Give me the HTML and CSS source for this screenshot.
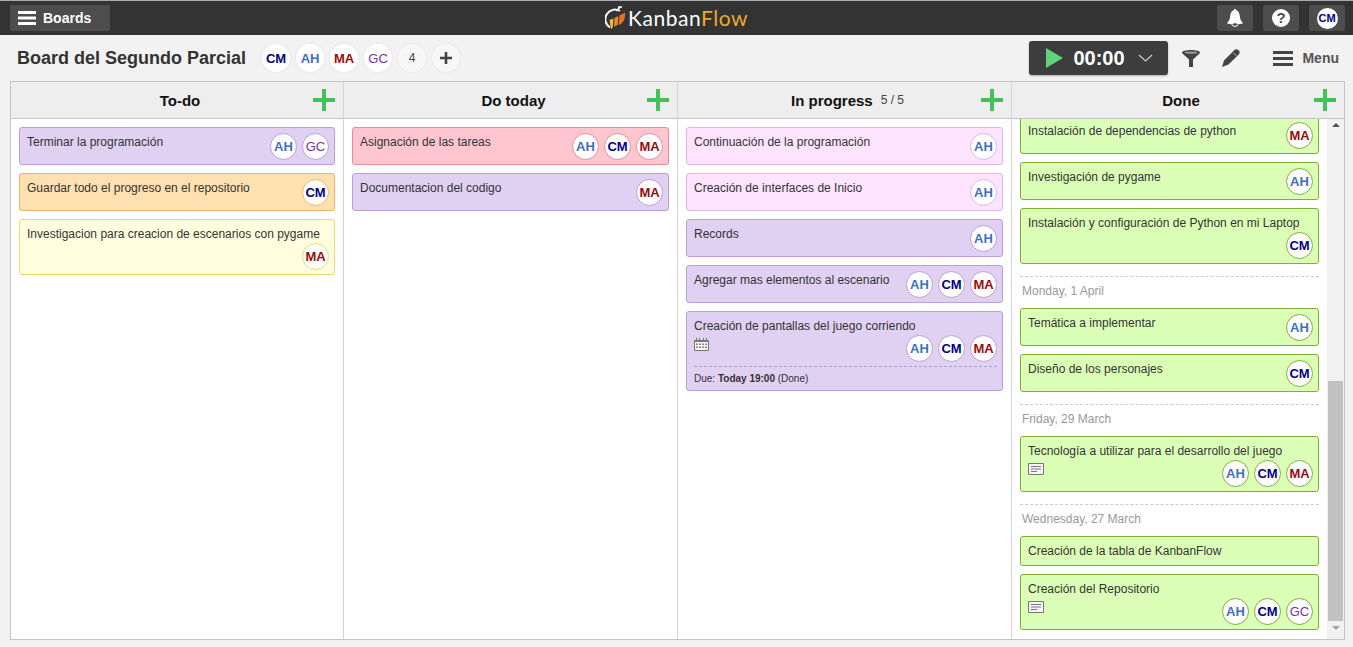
FILE: index.html
```html
<!DOCTYPE html>
<html lang="en">
<head>
    <meta charset="UTF-8">
    <meta name="viewport" content="width=device-width, initial-scale=1.0">
    <title>KanbanFlow</title>
    <link rel="stylesheet" href="styles.css">
</head>
<body>
    <header class="topbar">
        <button class="top-btn boards-btn">
            <svg width="18" height="14" viewBox="0 0 18 14"><path d="M0 0h18v3H0zM0 5.500h18v3H0zM0 11h18v3H0z" fill="#fff"/></svg>
            Boards
        </button>
        <div class="logo">
            <svg width="22" height="24" viewBox="0 0 22 24">
                <path d="M5 21.500A9 9 0 0 1 15 5" fill="none" stroke="#fff" stroke-width="2"/>
                <path d="M11 5l4-3.500M13 1l4 0" fill="none" stroke="#fff" stroke-width="1.500"/>
                <path d="M4.500 14l4-1.500-1 9.500-1.500 1z" fill="#f5c33a"/>
                <path d="M9.500 12l4-2-1 9-3.500 1.500z" fill="#ee8a22"/>
                <path d="M14.500 9.500L20 6.500c.5 6-1.500 11-6.500 12.500z" fill="#e8711d"/>
            </svg>
            <span class="logo-text">Kanban<span class="logo-flow">Flow</span></span>
        </div>
        <div class="top-right">
            <button class="top-btn icon-btn">
                <svg width="16" height="18" viewBox="0 0 16 18">
                    <path d="M8 0c.8 0 1.300.6 1.300 1.300C11.500 2 12.500 4 12.800 7c.2 3 1.200 5 3.200 7.200-2 1.300-14 1.300-16 0C2 12 3 10 3.200 7 3.500 4 4.500 2 6.700 1.300 6.700.6 7.200 0 8 0z" fill="#fff"/>
                    <ellipse cx="8" cy="15.500" rx="3" ry="1.800" fill="#4d4d4d" stroke="#fff"/>
                </svg>
            </button>
            <button class="top-btn icon-btn">
                <span class="help">?</span>
            </button>
            <button class="top-btn icon-btn">
                <span class="me">CM</span>
            </button>
        </div>
    </header>

    <div class="subbar">
        <h1 class="board-title">Board del Segundo Parcial</h1>
        <div class="members">
            <span class="member cm">CM</span>
            <span class="member ah">AH</span>
            <span class="member ma">MA</span>
            <span class="member gc">GC</span>
            <span class="member count">4</span>
            <span class="member add">
                <svg width="12" height="12" viewBox="0 0 12 12"><path d="M4.700 0h2.600v4.700H12v2.600H7.300V12H4.700V7.300H0V4.700h4.700z" fill="#444"/></svg>
            </span>
        </div>
        <div class="tools">
            <button class="timer">
                <svg width="17" height="20" viewBox="0 0 17 20"><path d="M0 0l17 10L0 20z" fill="#5fd47a"/></svg>
                <span class="timer-time">00:00</span>
                <svg width="15" height="8" viewBox="0 0 15 8"><path d="M1 1l6.500 6L14 1" fill="none" stroke="#ccc" stroke-width="1.200"/></svg>
            </button>
            <svg class="tool-filter" width="18" height="17" viewBox="0 0 18 17">
                <path d="M0 2.500C0 1 4 0 9 0s9 1 9 2.500c0 .6-.4 1-1 1.500l-6 5.500V17H7V9.500L1 4C.4 3.500 0 3.100 0 2.500z" fill="#444"/>
                <ellipse cx="9" cy="2.600" rx="6.500" ry="1.100" fill="#999"/>
            </svg>
            <svg class="tool-pencil" width="18" height="18" viewBox="0 0 18 18">
                <path d="M0 18l2-6.500L12 1.500C13.500 0 15 0 16.500 1.200 18 2.500 18 4 16.700 5.500L6.500 15.500z" fill="#444"/>
                <path d="M11.500 4l2.800 2.800" fill="none" stroke="#ddd" stroke-width=".8"/>
            </svg>
            <div class="menu-link">
                <svg width="20" height="15" viewBox="0 0 20 15"><path d="M0 0h20v3H0zM0 6h20v3H0zM0 12h20v3H0z" fill="#444"/></svg>
                <span>Menu</span>
            </div>
        </div>
    </div>

    <main class="board">
        <section class="column">
            <div class="column-head">
                <span class="column-name">To-do</span>
                <span class="plus"></span>
            </div>
            <div class="cards">
                <div class="card purple">
                    <div class="card-text">Terminar la programación</div>
                    <div class="avatars"><span class="avatar ah">AH</span><span class="avatar gc">GC</span></div>
                </div>
                <div class="card orange">
                    <div class="card-text">Guardar todo el progreso en el repositorio</div>
                    <div class="avatars"><span class="avatar cm">CM</span></div>
                </div>
                <div class="card yellow">
                    <div class="card-text">Investigacion para creacion de escenarios con pygame</div>
                    <div class="avatars"><span class="avatar ma">MA</span></div>
                </div>
            </div>
        </section>

        <section class="column">
            <div class="column-head">
                <span class="column-name">Do today</span>
                <span class="plus"></span>
            </div>
            <div class="cards">
                <div class="card red">
                    <div class="card-text">Asignación de las tareas</div>
                    <div class="avatars"><span class="avatar ah">AH</span><span class="avatar cm">CM</span><span class="avatar ma">MA</span></div>
                </div>
                <div class="card purple">
                    <div class="card-text">Documentacion del codigo</div>
                    <div class="avatars"><span class="avatar ma">MA</span></div>
                </div>
            </div>
        </section>

        <section class="column">
            <div class="column-head">
                <span class="column-name">In progress</span>
                <span class="wip">5 / 5</span>
                <span class="plus"></span>
            </div>
            <div class="cards">
                <div class="card pink">
                    <div class="card-text">Continuación de la programación</div>
                    <div class="avatars"><span class="avatar ah">AH</span></div>
                </div>
                <div class="card pink">
                    <div class="card-text">Creación de interfaces de Inicio</div>
                    <div class="avatars"><span class="avatar ah">AH</span></div>
                </div>
                <div class="card purple">
                    <div class="card-text">Records</div>
                    <div class="avatars"><span class="avatar ah">AH</span></div>
                </div>
                <div class="card purple">
                    <div class="card-text">Agregar mas elementos al escenario</div>
                    <div class="avatars"><span class="avatar ah">AH</span><span class="avatar cm">CM</span><span class="avatar ma">MA</span></div>
                </div>
                <div class="card purple">
                    <div class="card-text card-full">Creación de pantallas del juego corriendo</div>
                    <svg class="card-icon" width="15" height="13" viewBox="0 0 15 13">
                        <path d="M.5 2.500h14v10H.5z" fill="#f4f4f4" stroke="#777"/>
                        <path d="M1 2h13v2H1z" fill="#777"/>
                        <path d="M2 0h1v2H2zM5 0h1v2H5zM9 0h1v2H9zM12 0h1v2h-1z" fill="#777"/>
                        <path d="M2 5.500h2v1.500H2zM5 5.500h2v1.500H5zM8 5.500h2v1.500H8zM11 5.500h2v1.500h-2zM2 8.500h2v1.500H2zM5 8.500h2v1.500H5zM8 8.500h2v1.500H8zM11 8.500h2v1.500h-2z" fill="#888"/>
                    </svg>
                    <div class="avatars"><span class="avatar ah">AH</span><span class="avatar cm">CM</span><span class="avatar ma">MA</span></div>
                    <div class="due">Due: <b>Today 19:00</b> (Done)</div>
                </div>
            </div>
        </section>

        <section class="column">
            <div class="column-head">
                <span class="column-name">Done</span>
                <span class="plus"></span>
            </div>
            <div class="done-body">
                <div class="cards cards-scrolled">
                    <div class="card green">
                        <div class="card-text">Instalación de dependencias de python</div>
                        <div class="avatars"><span class="avatar ma">MA</span></div>
                    </div>
                    <div class="card green">
                        <div class="card-text">Investigación de pygame</div>
                        <div class="avatars"><span class="avatar ah">AH</span></div>
                    </div>
                    <div class="card green">
                        <div class="card-text card-full">Instalación y configuración de Python en mi Laptop</div>
                        <div class="avatars"><span class="avatar cm">CM</span></div>
                    </div>
                    <div class="day">Monday, 1 April</div>
                    <div class="card green">
                        <div class="card-text">Temática a implementar</div>
                        <div class="avatars"><span class="avatar ah">AH</span></div>
                    </div>
                    <div class="card green">
                        <div class="card-text">Diseño de los personajes</div>
                        <div class="avatars"><span class="avatar cm">CM</span></div>
                    </div>
                    <div class="day">Friday, 29 March</div>
                    <div class="card green">
                        <div class="card-text card-full">Tecnología a utilizar para el desarrollo del juego</div>
                        <svg class="card-icon" width="16" height="12" viewBox="0 0 16 12">
                            <path d="M.5.500h15v11H.5z" fill="#f7f7f7" stroke="#777"/>
                            <path d="M3 3h10v1H3zM3 5.500h10v1H3zM3 8h6v1H3z" fill="#777"/>
                        </svg>
                        <div class="avatars"><span class="avatar ah">AH</span><span class="avatar cm">CM</span><span class="avatar ma">MA</span></div>
                    </div>
                    <div class="day">Wednesday, 27 March</div>
                    <div class="card green">
                        <div class="card-text card-plain">Creación de la tabla de KanbanFlow</div>
                    </div>
                    <div class="card green">
                        <div class="card-text card-full">Creación del Repositorio</div>
                        <svg class="card-icon" width="16" height="12" viewBox="0 0 16 12">
                            <path d="M.5.500h15v11H.5z" fill="#f7f7f7" stroke="#777"/>
                            <path d="M3 3h10v1H3zM3 5.500h10v1H3zM3 8h6v1H3z" fill="#777"/>
                        </svg>
                        <div class="avatars"><span class="avatar ah">AH</span><span class="avatar cm">CM</span><span class="avatar gc">GC</span></div>
                    </div>
                </div>
                <div class="scrollbar">
                    <span class="arrow-up"></span>
                    <span class="thumb"></span>
                    <span class="arrow-down"></span>
                </div>
            </div>
        </section>
    </main>
</body>
</html>
```

FILE: styles.css
```css
* {
    box-sizing: border-box;
}
html, body {
    height: 100%;
}
body {
    margin: 0;
    display: flex;
    flex-direction: column;
    overflow: hidden;
    background-color: #f2f2f2;
    color: #333;
    font-family: "Liberation Sans", Arial, sans-serif;
    font-size: 12px;
}
button {
    font-family: inherit;
    border: none;
    padding: 0;
}

/* top bar */
.topbar {
    position: relative;
    flex: none;
    height: 35px;
    padding: 4px 8px 4px 10px;
    display: flex;
    justify-content: space-between;
    align-items: stretch;
    background-color: #333;
    border-top: 1px solid #aaa;
}
.top-btn {
    display: flex;
    align-items: center;
    justify-content: center;
    background-color: #4d4d4d;
    color: #fff;
    border-radius: 2px;
}
.boards-btn {
    width: 100px;
    padding-left: 8px;
    justify-content: flex-start;
    gap: 7px;
    font-size: 14px;
    font-weight: bold;
}
.logo {
    position: absolute;
    left: 605px;
    top: 4px;
    display: flex;
    align-items: center;
    gap: 1px;
}
.logo-text {
    font-family: Lato, "Open Sans", sans-serif;
    font-size: 21px;
    font-weight: 400;
    letter-spacing: .55px;
    color: #fff;
}
.logo-flow {
    color: #eda928;
}
.top-right {
    display: flex;
    gap: 10px;
}
.icon-btn {
    width: 36px;
}
.help {
    width: 18px;
    height: 18px;
    border-radius: 50%;
    background-color: #fff;
    color: #4d4d4d;
    font-size: 15px;
    font-weight: bold;
    line-height: 18px;
    text-align: center;
}
.me {
    width: 21px;
    height: 21px;
    border-radius: 50%;
    background-color: #fff;
    color: #00008b;
    font-size: 11px;
    font-weight: bold;
    line-height: 21px;
    text-align: center;
}

/* board title row */
.subbar {
    flex: none;
    height: 46px;
    padding: 0 14px 0 17px;
    display: flex;
    align-items: center;
}
.board-title {
    margin: 0 16px 0 0;
    font-size: 18px;
    font-weight: bold;
    color: #333;
}
.members {
    display: flex;
    gap: 6px;
}
.member {
    width: 28px;
    height: 28px;
    border-radius: 50%;
    display: flex;
    align-items: center;
    justify-content: center;
    background-color: #fff;
    font-size: 13px;
    box-shadow: 0 0 3px rgba(0, 0, 0, 0.08);
}
.count {
    background-color: #f7f7f7;
    color: #444;
    font-size: 12px;
}
.add {
    background-color: #f7f7f7;
}
.cm { color: #00008b; font-weight: bold; }
.ah { color: #3f6fc4; font-weight: bold; }
.ma { color: #9b0a0a; font-weight: bold; }
.gc { color: #7b2fa8; }
.tools {
    margin-left: auto;
    display: flex;
    align-items: center;
}
.timer {
    width: 139px;
    height: 34px;
    padding-left: 17px;
    display: flex;
    align-items: center;
    background-color: #3d3d3d;
    border-radius: 3px;
    box-shadow: 0 1px 2px rgba(0, 0, 0, 0.3);
}
.timer-time {
    width: 65px;
    margin-left: 10px;
    color: #fff;
    font-size: 20px;
    font-weight: bold;
    text-align: left;
}
.tool-filter {
    margin-left: 14px;
}
.tool-pencil {
    margin-left: 22px;
}
.menu-link {
    margin-left: 33px;
    display: flex;
    align-items: center;
    gap: 9px;
    color: #555;
    font-size: 14px;
    font-weight: bold;
}

/* board */
.board {
    flex: 1;
    min-height: 0;
    margin: 0 8px 7px 10px;
    display: grid;
    grid-template-columns: 333px 334px 334px 1fr;
    background-color: #fff;
    border: 1px solid #c4c4c4;
}
.column {
    min-width: 0;
    min-height: 0;
    display: flex;
    flex-direction: column;
    border-right: 1px solid #d4d4d4;
}
.column:last-child {
    border-right: none;
}
.column-head {
    position: relative;
    flex: none;
    height: 37px;
    padding-left: 6px;
    display: flex;
    align-items: center;
    justify-content: center;
    gap: 8px;
    background-color: #eee;
    border-bottom: 1px solid #c4c4c4;
    color: #111;
}
.column-name {
    font-size: 15px;
    font-weight: bold;
}
.wip {
    font-size: 12px;
    color: #444;
}
.plus {
    position: absolute;
    right: 8px;
    top: 7px;
    width: 22px;
    height: 22px;
    background:
        linear-gradient(#43c05a, #43c05a) center / 22px 4px no-repeat,
        linear-gradient(#43c05a, #43c05a) center / 4px 22px no-repeat;
}

/* cards */
.cards {
    display: flex;
    flex-direction: column;
    gap: 8px;
    padding: 8px;
}
.card {
    padding: 5px 5px 4px 7px;
    display: flex;
    flex-wrap: wrap;
    justify-content: space-between;
    border: 1px solid;
    border-radius: 3px;
}
.card-text {
    margin: 2px 0;
    line-height: 14px;
    color: #333;
}
.card-full {
    width: 100%;
}
.card-plain {
    margin-bottom: 3px;
}
.card-icon {
    margin-top: 3px;
}
.avatars {
    margin-left: auto;
    display: flex;
    gap: 5px;
    border-color: inherit;
}
.avatar {
    width: 27px;
    height: 27px;
    border: 1px solid;
    border-color: inherit;
    border-radius: 50%;
    display: flex;
    align-items: center;
    justify-content: center;
    background-color: #fff;
    font-size: 13px;
}
.purple { background-color: #e0d0f2; border-color: #bb9fdc; }
.orange { background-color: #ffe0b0; border-color: #eab566; }
.yellow { background-color: #ffffdf; border-color: #efd96a; }
.red { background-color: #ffc6d0; border-color: #e98a9c; }
.pink { background-color: #ffe4ff; border-color: #e2b2ea; }
.green { background-color: #dcffb8; border-color: #80b030; }
.due {
    width: 100%;
    margin-top: 4px;
    padding-top: 5px;
    border-top: 1px dashed #b79bd8;
    font-size: 10px;
    line-height: 14px;
    color: #333;
}

/* done column */
.done-body {
    flex: 1;
    min-height: 0;
    display: flex;
    overflow: hidden;
}
.cards-scrolled {
    flex: 1;
    min-width: 0;
    margin-top: -11px;
    padding-right: 8px;
    align-self: flex-start;
}
.day {
    margin-top: 4px;
    padding: 7px 0 0 2px;
    height: 24px;
    border-top: 1px dashed #ccc;
    color: #999;
    line-height: 14px;
}
.scrollbar {
    flex: none;
    width: 17px;
    display: flex;
    flex-direction: column;
    align-items: center;
    background-color: #f1f1f1;
}
.arrow-up {
    margin-top: 4px;
    border: 4px solid transparent;
    border-top: none;
    border-bottom: 4px solid #555;
}
.thumb {
    width: 15px;
    height: 240px;
    margin-top: 254px;
    background-color: #c1c1c1;
}
.arrow-down {
    margin-top: 5px;
    border: 4px solid transparent;
    border-bottom: none;
    border-top: 4px solid #a3a3a3;
}
```
